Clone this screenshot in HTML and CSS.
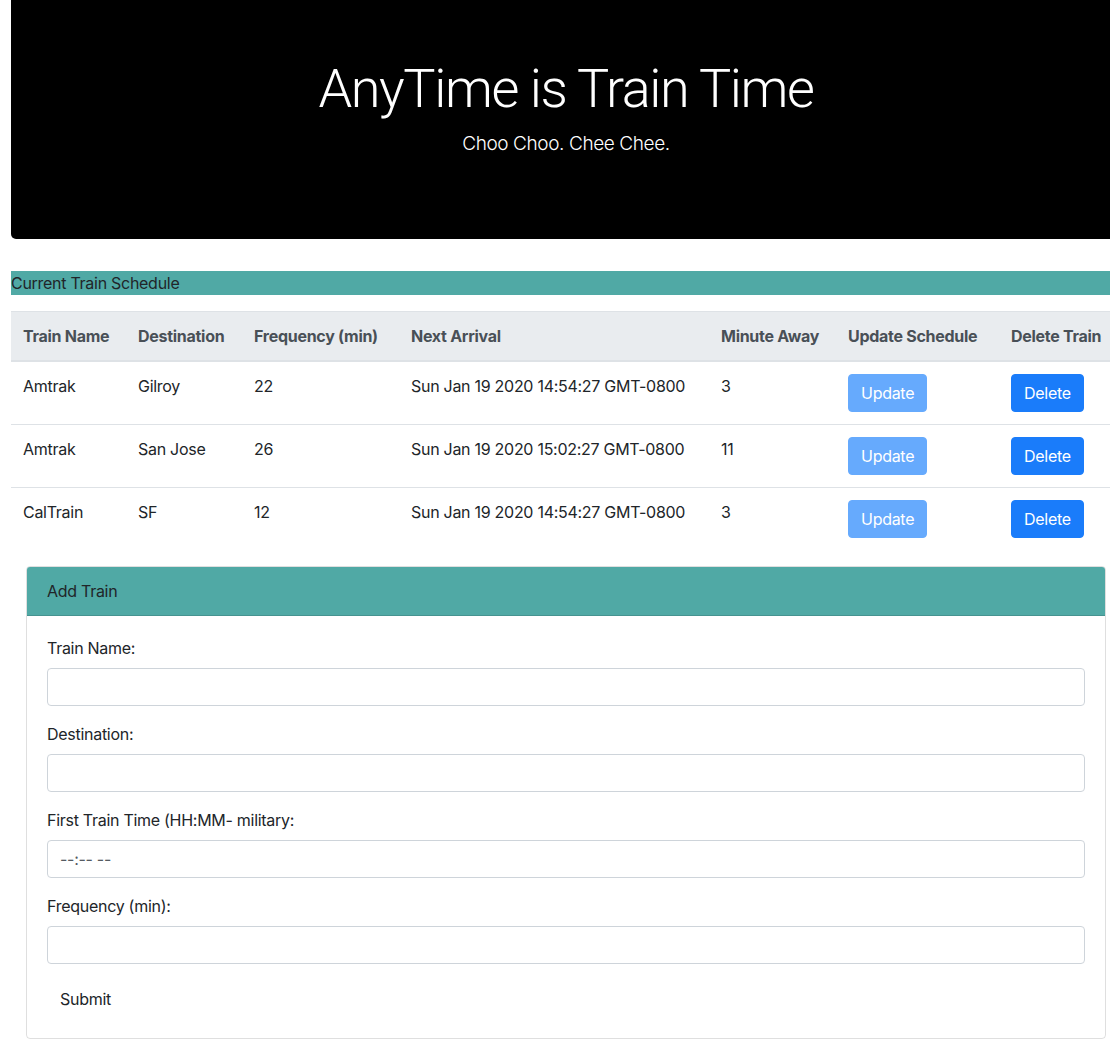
FILE: index.html
```html
<!DOCTYPE html>
<html lang="en">
<head>
<meta charset="utf-8">
<title>AnyTime is Train Time</title>
<link rel="stylesheet" href="styles.css">
</head>
<body>
<div class="page">
  <header class="jumbotron">
    <h1 class="display">AnyTime is Train Time</h1>
    <p class="lead">Choo Choo. Chee Chee.</p>
  </header>

  <div class="section-bar">Current Train Schedule</div>

  <table class="schedule">
    <colgroup>
      <col class="c1"><col class="c2"><col class="c3"><col class="c4"><col class="c5"><col class="c6"><col class="c7">
    </colgroup>
    <thead>
      <tr>
        <th>Train Name</th>
        <th>Destination</th>
        <th>Frequency (min)</th>
        <th>Next Arrival</th>
        <th>Minute Away</th>
        <th>Update Schedule</th>
        <th>Delete Train</th>
      </tr>
    </thead>
    <tbody>
      <tr>
        <td>Amtrak</td>
        <td>Gilroy</td>
        <td>22</td>
        <td>Sun Jan 19 2020 14:54:27 GMT-0800</td>
        <td>3</td>
        <td><button class="btn btn-update">Update</button></td>
        <td><button class="btn btn-delete">Delete</button></td>
      </tr>
      <tr>
        <td>Amtrak</td>
        <td>San Jose</td>
        <td>26</td>
        <td>Sun Jan 19 2020 15:02:27 GMT-0800</td>
        <td>11</td>
        <td><button class="btn btn-update">Update</button></td>
        <td><button class="btn btn-delete">Delete</button></td>
      </tr>
      <tr>
        <td>CalTrain</td>
        <td>SF</td>
        <td>12</td>
        <td>Sun Jan 19 2020 14:54:27 GMT-0800</td>
        <td>3</td>
        <td><button class="btn btn-update">Update</button></td>
        <td><button class="btn btn-delete">Delete</button></td>
      </tr>
    </tbody>
  </table>

  <section class="card">
    <div class="card-header">Add Train</div>
    <form class="card-body">
      <div class="form-group">
        <label for="name">Train Name:</label>
        <input id="name" class="form-control" type="text">
      </div>
      <div class="form-group">
        <label for="dest">Destination:</label>
        <input id="dest" class="form-control" type="text">
      </div>
      <div class="form-group">
        <label for="first">First Train Time (HH:MM- military:</label>
        <input id="first" class="form-control" type="text" placeholder="--:-- --">
      </div>
      <div class="form-group">
        <label for="freq">Frequency (min):</label>
        <input id="freq" class="form-control" type="text">
      </div>
      <button type="button" class="btn btn-plain">Submit</button>
    </form>
  </section>
</div>
</body>
</html>
```
FILE: styles.css
```css
html, body {
  margin: 0;
  padding: 0;
  overflow-x: hidden;
  background: #fff;
}
body {
  font-family: Inter, "Noto Sans", "Liberation Sans", sans-serif;
  font-size: 16px;
  line-height: 24px;
  letter-spacing: -0.28px;
  color: #212529;
}
.page {
  margin-left: 11px;
  margin-right: -11px;
}
.jumbotron {
  background: #000;
  color: #fff;
  text-align: center;
  padding: 54px 32px 64px;
  border-radius: 0 0 5px 5px;
  margin-bottom: 32px;
}
.display {
  margin: 0 0 8px;
  padding-top: 2px;
  height: 65px;
  font-family: Roboto, Inter, sans-serif;
  font-size: 54px;
  font-weight: 300;
  line-height: 65px;
  letter-spacing: -1.4px;
}
.lead {
  margin: 0 0 16px;
  font-size: 19px;
  font-weight: 300;
  line-height: 30px;
  letter-spacing: -0.4px;
}
.section-bar {
  background: #50a9a5;
  height: 24px;
  line-height: 24px;
  margin-bottom: 16px;
}
.schedule {
  width: 100%;
  border-collapse: collapse;
  table-layout: fixed;
  margin-bottom: 16px;
}
.c1 { width: 115px; }
.c2 { width: 116px; }
.c3 { width: 157px; }
.c4 { width: 310px; }
.c5 { width: 127px; }
.c6 { width: 163px; }
.c7 { width: 122px; }
.schedule th,
.schedule td {
  padding: 12px;
  text-align: left;
  vertical-align: top;
  border-top: 1px solid #dee2e6;
  white-space: nowrap;
}
.schedule thead th {
  background: #e9ecef;
  color: #495057;
  font-weight: 700;
  border-bottom: 2px solid #dee2e6;
}
.btn {
  display: inline-block;
  font-family: inherit;
  font-size: 16px;
  line-height: 24px;
  letter-spacing: -0.28px;
  padding: 6px 12px;
  border: 1px solid transparent;
  border-radius: 4px;
  cursor: pointer;
}
.btn-update {
  background: #66aafd;
  border-color: #66aafd;
  color: #fff;
}
.btn-delete {
  background: #1a7cfa;
  border-color: #1a7cfa;
  color: #fff;
}
.btn-plain {
  background: transparent;
  color: #212529;
}
.card {
  margin: 0 15px;
  border: 1px solid rgba(0, 0, 0, 0.125);
  border-radius: 4px;
  overflow: hidden;
}
.card-header {
  background: #50a9a5;
  padding: 12px 20px;
  border-bottom: 1px solid rgba(0, 0, 0, 0.125);
}
.card-body {
  display: block;
  padding: 20px;
  margin: 0;
}
.form-group {
  margin-bottom: 16px;
}
.form-group label {
  display: block;
  margin-bottom: 8px;
}
.form-control {
  display: block;
  box-sizing: border-box;
  width: 100%;
  height: 38px;
  padding: 6px 12px;
  font-family: inherit;
  font-size: 16px;
  line-height: 24px;
  letter-spacing: -0.28px;
  color: #495057;
  background: #fff;
  border: 1px solid #ced4da;
  border-radius: 4px;
}
.form-control::placeholder {
  color: #555b61;
}
```
